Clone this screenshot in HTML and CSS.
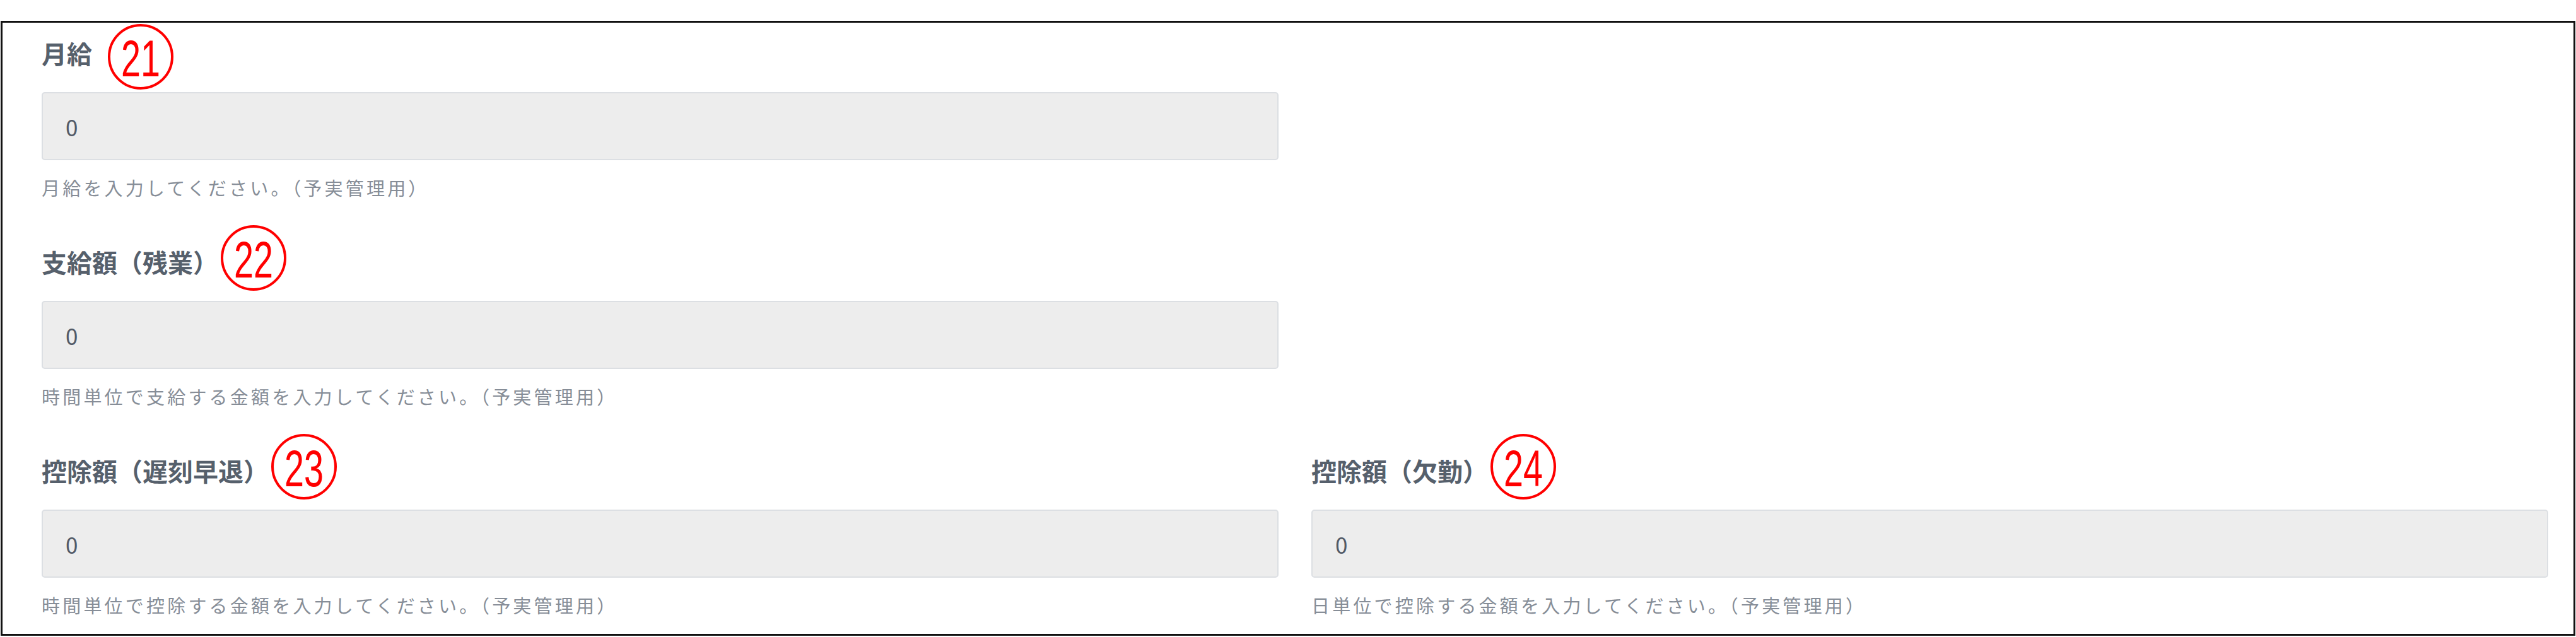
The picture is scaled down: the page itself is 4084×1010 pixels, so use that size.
FILE: index.html
```html
<!DOCTYPE html>
<html lang="ja">
<head>
    <meta charset="UTF-8">
    <title>給与設定</title>
    <link rel="stylesheet" href="styles.css">
</head>
<body>
    <div class="panel">
        <div class="form-row">
            <div class="field">
                <div class="field-label">
                    <span class="label-text">月給</span>
                    <svg class="mark mark-low" viewBox="0 0 104 104"><circle cx="52" cy="52" r="50"/><text x="52" y="83" textLength="62" lengthAdjust="spacingAndGlyphs">21</text></svg>
                </div>
                <input class="field-input" type="text" value="0" readonly>
                <p class="field-help">月給を入力してください。（予実管理用）</p>
            </div>
        </div>

        <div class="form-row">
            <div class="field">
                <div class="field-label">
                    <span class="label-text">支給額（残業）</span>
                    <svg class="mark" viewBox="0 0 104 104"><circle cx="52" cy="52" r="50"/><text x="52" y="83" textLength="62" lengthAdjust="spacingAndGlyphs">22</text></svg>
                </div>
                <input class="field-input" type="text" value="0" readonly>
                <p class="field-help">時間単位で支給する金額を入力してください。（予実管理用）</p>
            </div>
        </div>

        <div class="form-row">
            <div class="field">
                <div class="field-label">
                    <span class="label-text">控除額（遅刻早退）</span>
                    <svg class="mark" viewBox="0 0 104 104"><circle cx="52" cy="52" r="50"/><text x="52" y="83" textLength="62" lengthAdjust="spacingAndGlyphs">23</text></svg>
                </div>
                <input class="field-input" type="text" value="0" readonly>
                <p class="field-help">時間単位で控除する金額を入力してください。（予実管理用）</p>
            </div>
            <div class="field">
                <div class="field-label">
                    <span class="label-text">控除額（欠勤）</span>
                    <svg class="mark" viewBox="0 0 104 104"><circle cx="52" cy="52" r="50"/><text x="52" y="83" textLength="62" lengthAdjust="spacingAndGlyphs">24</text></svg>
                </div>
                <input class="field-input" type="text" value="0" readonly>
                <p class="field-help">日単位で控除する金額を入力してください。（予実管理用）</p>
            </div>
        </div>
    </div>
</body>
</html>
```

FILE: styles.css
```css
body {
    margin: 0;
    padding: 0;
    background-color: #fff;
    font-family: 'Noto Sans CJK JP', 'Noto Sans', sans-serif;
}

.panel {
    margin: 33px 1px 0 1px;
    border: 3px solid #111;
    padding: 24px 40px 28px 62px;
    display: flex;
    flex-direction: column;
    gap: 76px;
}

.form-row {
    display: grid;
    grid-template-columns: 1fr 1fr;
    column-gap: 52px;
}

.field {
    display: flex;
    flex-direction: column;
}

.field-label {
    display: flex;
    align-items: center;
    height: 48px;
    margin-bottom: 38px;
}

.label-text {
    font-size: 40px;
    line-height: 48px;
    font-weight: 700;
    color: #56606c;
}

/* annotation circles drawn over the screenshot */
.mark {
    position: relative;
    top: -6px;
    flex: none;
    width: 104px;
    height: 104px;
    margin: -28px 0 -28px 4px;
    overflow: visible;
}

.mark circle {
    fill: none;
    stroke: #ff0000;
    stroke-width: 4;
}

.mark text {
    fill: #ff0000;
    font-family: 'Liberation Sans', Arial, sans-serif;
    font-size: 82px;
    text-anchor: middle;
}

.mark-low {
    top: 6px;
    margin-left: 25px;
}

.field-input {
    box-sizing: border-box;
    width: 100%;
    height: 108px;
    margin: 0;
    padding: 0 36px;
    font-family: 'Noto Sans CJK JP', 'Noto Sans', sans-serif;
    font-size: 35px;
    color: #525a67;
    background-color: #ededed;
    border: 2px solid #dcdfe3;
    border-radius: 5px;
    outline: none;
}

.field-help {
    margin: 25px 0 0 0;
    font-size: 29px;
    line-height: 36px;
    letter-spacing: 4.2px;
    color: #868d97;
}
```
